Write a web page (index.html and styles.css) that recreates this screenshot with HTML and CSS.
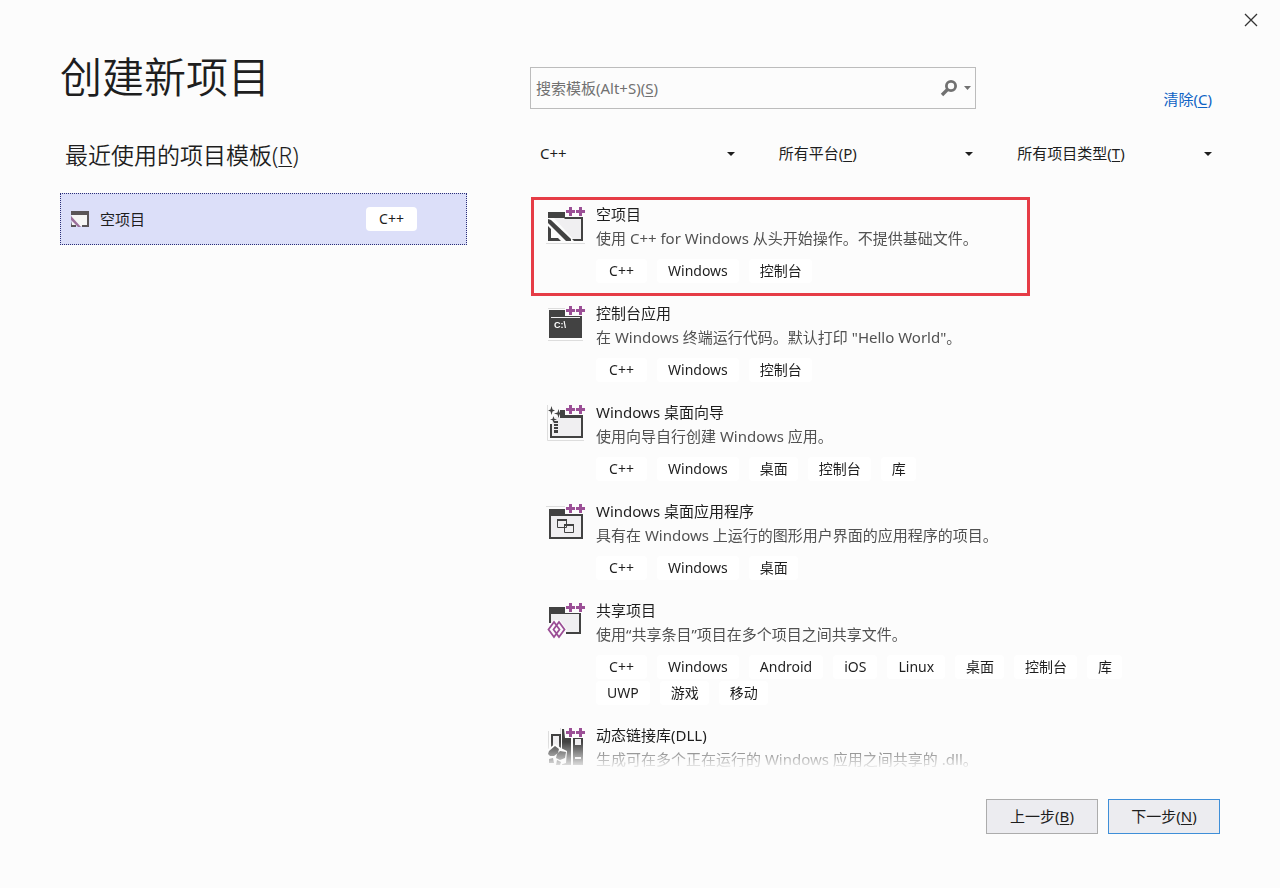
FILE: index.html
```html
<!DOCTYPE html>
<html lang="zh-CN">
<head>
<meta charset="utf-8">
<meta name="viewport" content="width=device-width, initial-scale=1">
<title>创建新项目</title>
<link rel="stylesheet" href="styles.css">
</head>
<body>
<svg class="defs" aria-hidden="true">
  <defs>
    <g id="plusplus">
      <path d="M19 2h21v11H19z" fill="#fcfcfc"/>
      <path d="M23 3h3v3h3v3h-3v3h-3V9h-3V6h3zM33 3h3v3h3v3h-3v3h-3V9h-3V6h3z" fill="#9b4f96"/>
    </g>
    <g id="empty-window">
      <path d="M7 13h29v23H28z" fill="#f0eff1"/>
      <path d="M2 8h17v5h18v24H28l-2-2h9V15H19l-1-1H2z" fill="#424242"/>
      <path d="M2 15l3 1 20 19v2h-5L2 19z" fill="#424242"/>
      <path d="M2 22l3 3v9h7l3 3H2z" fill="#424242"/>
    </g>
  </defs>
</svg>
<div class="dialog">
  <header class="titlebar">
    <button class="close" type="button" aria-label="关闭">
      <svg width="14" height="14" viewBox="0 0 14 14"><path d="M1 1l12 12M13 1L1 13" stroke="#333" stroke-width="1.3" fill="none"/></svg>
    </button>
  </header>
  <div class="columns">
    <section class="recent">
      <h1>创建新项目</h1>
      <h2>最近使用的项目模板(<u>R</u>)</h2>
      <button class="recent-item" type="button">
        <svg width="20" height="20" viewBox="0 0 20 20" aria-hidden="true">
          <path d="M2 3h16v14H2z" fill="#f6f6f6"/>
          <path d="M1 2h18v4H1zM17 6h2v12h-7v-2h5zM1 12l1 4h4v2H1z" fill="#5a5558"/>
          <path d="M1 7l10 11H8L1 11z" fill="#9b6f9b"/>
        </svg>
        <span class="recent-name">空项目</span>
        <span class="tag lang">C++</span>
      </button>
    </section>
    <section class="browse">
      <div class="search-row">
        <div class="search">
          <input id="search" type="text">
          <label for="search">搜索模板(Alt+S)(<u>S</u>)</label>
          <button class="search-button" type="button" aria-label="搜索">
            <svg width="32" height="20" viewBox="0 0 32 20"><circle cx="11" cy="8" r="4.6" stroke="#717171" stroke-width="2.8" fill="none"/><path d="M8 11l-6 6" stroke="#717171" stroke-width="3.4"/><path d="M24 8h7l-3.500 4z" fill="#717171"/></svg>
          </button>
        </div>
        <a class="clear" href="#">清除(<u>C</u>)</a>
      </div>
      <div class="filters">
        <div class="filter">
          <select aria-label="语言"><option>C++</option></select>
          <svg width="8" height="6" viewBox="0 0 8 6" aria-hidden="true"><path d="M0 2h8L4 6z" fill="#1e1e1e"/></svg>
        </div>
        <div class="filter">
          <label for="platform">所有平台(<u>P</u>)</label>
          <select id="platform"><option></option></select>
          <svg width="8" height="6" viewBox="0 0 8 6" aria-hidden="true"><path d="M0 2h8L4 6z" fill="#1e1e1e"/></svg>
        </div>
        <div class="filter">
          <label for="type">所有项目类型(<u>T</u>)</label>
          <select id="type"><option></option></select>
          <svg width="8" height="6" viewBox="0 0 8 6" aria-hidden="true"><path d="M0 2h8L4 6z" fill="#1e1e1e"/></svg>
        </div>
      </div>
      <ul class="templates">
        <li class="template marked">
          <svg class="icon" viewBox="0 0 40 40" aria-hidden="true">
            <path d="M0 39.500h39" stroke="#ddd"/>
            <use href="#empty-window"/><use href="#plusplus"/>
          </svg>
          <div class="info">
            <h3>空项目</h3>
            <p>使用 C++ for Windows 从头开始操作。不提供基础文件。</p>
            <div class="tags"><span class="tag lang">C++</span><span class="tag">Windows</span><span class="tag zh">控制台</span></div>
          </div>
        </li>
        <li class="template">
          <svg class="icon" viewBox="0 0 40 40" aria-hidden="true">
            <path d="M2 5.500h17M2 37.500h35" stroke="#ddd"/>
            <path d="M3 7h33v28H3z" fill="#424242"/>
            <path d="M5 14.500h29" stroke="#f0eff1"/>
            <text class="prompt" x="8" y="25">C:\</text>
            <use href="#plusplus"/>
          </svg>
          <div class="info">
            <h3>控制台应用</h3>
            <p>在 Windows 终端运行代码。默认打印 "Hello World"。</p>
            <div class="tags"><span class="tag lang">C++</span><span class="tag">Windows</span><span class="tag zh">控制台</span></div>
          </div>
        </li>
        <li class="template">
          <svg class="icon" viewBox="0 0 40 40" aria-hidden="true">
            <path d="M1.500 3v35.500H38" stroke="#ddd" fill="none"/>
            <path d="M6 15h29v19H6z" fill="#f0eff1"/>
            <path d="M14 8h5v5h18v23H4V22h2v12h29V16H14z" fill="#424242"/>
            <path d="M5.500 4l1 3.500L9 8.500 6.500 9.500l-1 3.500-1-3.500L2 8.500l2.500-1zM12.500 7l1 3.500 3.500 1-3.500 1-1 3.500-1-3.500-3.500-1 3.500-1zM7.500 14l.8 2.700 2.700.8-2.700.8-.8 2.700-.8-2.700-2.700-.8 2.700-.8z" fill="#424242"/>
            <path d="M8 19h4v2H8zM8 22h4v2H8zM8 25h4v2H8zM8 28h4v3H8z" fill="#424242"/>
            <use href="#plusplus"/>
          </svg>
          <div class="info">
            <h3>Windows 桌面向导</h3>
            <p>使用向导自行创建 Windows 应用。</p>
            <div class="tags"><span class="tag lang">C++</span><span class="tag">Windows</span><span class="tag zh">桌面</span><span class="tag zh">控制台</span><span class="tag zh">库</span></div>
          </div>
        </li>
        <li class="template">
          <svg class="icon" viewBox="0 0 40 40" aria-hidden="true">
            <path d="M0 5.500h19" stroke="#ddd"/>
            <path d="M4 15h32v22H4z" fill="#f0eff1"/>
            <path d="M3 8h16v5h18v25H3zM5 15v21h30V15z" fill="#424242" fill-rule="evenodd"/>
            <path d="M11.500 18.500h9v8h-9zM18.500 23.500h9v8h-9z" fill="#f0eff1" stroke="#424242"/>
            <path d="M11 18h10v2H11zM18 23h10v2H18z" fill="#424242"/>
            <use href="#plusplus"/>
          </svg>
          <div class="info">
            <h3>Windows 桌面应用程序</h3>
            <p>具有在 Windows 上运行的图形用户界面的应用程序的项目。</p>
            <div class="tags"><span class="tag lang">C++</span><span class="tag">Windows</span><span class="tag zh">桌面</span></div>
          </div>
        </li>
        <li class="template">
          <svg class="icon" viewBox="0 0 40 40" aria-hidden="true">
            <path d="M5 12h29v20H5z" fill="#f0eff1"/>
            <path d="M3 7h16v5h16v22H20v-2h13V14H5v9H3z" fill="#424242"/>
            <path d="M7 20h7l7 10-7 9H7l-6-9z" fill="#fcfcfc"/>
            <path d="M8 22l-5.500 7.500L8 37l5.500-7.500zM13 22l-5.500 7.500L13 37l5.500-7.500z" fill="none" stroke="#9b4f96" stroke-width="1.8"/>
            <use href="#plusplus"/>
          </svg>
          <div class="info">
            <h3>共享项目</h3>
            <p>使用“共享条目”项目在多个项目之间共享文件。</p>
            <div class="tags"><span class="tag lang">C++</span><span class="tag">Windows</span><span class="tag">Android</span><span class="tag">iOS</span><span class="tag">Linux</span><span class="tag zh">桌面</span><span class="tag zh">控制台</span><span class="tag zh">库</span><span class="tag">UWP</span><span class="tag zh">游戏</span><span class="tag zh">移动</span></div>
          </div>
        </li>
        <li class="template">
          <svg class="icon" viewBox="0 0 40 40" aria-hidden="true">
            <path d="M2.500 6v34M14.500 3v6" stroke="#ddd"/>
            <path d="M6 10h8v20H6z" fill="#f0eff1" stroke="#424242" stroke-width="2"/>
            <path d="M16 4h2l1 9h6v27h-9zM27 12h10v28H27z" fill="#424242"/>
            <path d="M29 14h6v6h-6zM29 32h6v2h-6z" fill="#f0eff1"/>
            <path d="M2 24l7-5 6 4 6 3-1 12-6 2H1z" fill="#fcfcfc"/>
            <path d="M3 26l6-5 4 3-1 4-4 3H4l-2-2zM14 26l6 1-1 6-5 2-4-2 1-4zM3 34l4-1 1 5H3zM11 35l4 2-1 3h-4z" fill="#424242"/>
            <use href="#plusplus"/>
          </svg>
          <div class="info">
            <h3>动态链接库(DLL)</h3>
            <p>生成可在多个正在运行的 Windows 应用之间共享的 .dll。</p>
          </div>
        </li>
      </ul>
    </section>
  </div>
  <footer class="actions">
    <button type="button">上一步(<u>B</u>)</button>
    <button class="primary" type="button">下一步(<u>N</u>)</button>
  </footer>
</div>
</body>
</html>
```
FILE: styles.css
```css
*, *::after {
  box-sizing: border-box;
}

body {
  margin: 0;
  background: #fcfcfc;
  color: #1e1e1e;
  font: 15px/24px "Noto Sans", "Noto Sans CJK SC", sans-serif;
}

h1, h2, h3, p, ul {
  margin: 0;
  padding: 0;
  font-weight: 400;
}

u {
  text-underline-offset: 2px;
  text-decoration-thickness: 1px;
}

button, input, select {
  margin: 0;
  border: 0;
  background: none;
  color: inherit;
  font: inherit;
}

svg {
  display: block;
  flex: none;
}

.defs {
  position: absolute;
  width: 0;
  height: 0;
}

.dialog {
  display: flex;
  flex-direction: column;
  height: 100vh;
}

.titlebar {
  display: flex;
  justify-content: flex-end;
  padding: 4px 13px 0;
  height: 40px;
}

.close {
  display: grid;
  place-items: center;
  width: 32px;
  height: 32px;
  padding: 0;
}

.columns {
  display: grid;
  grid-template-columns: 407fr 690fr;
  grid-template-rows: minmax(0, 1fr);
  gap: 63px;
  flex: 1;
  min-height: 0;
  padding: 0 60px;
}

.recent h1 {
  padding-top: 7px;
  font-size: 42px;
  font-weight: 350;
  line-height: 60px;
}

.recent h2 {
  padding: 31px 5px 0;
  font-size: 23px;
  font-weight: 350;
  line-height: 34px;
}

.recent-item {
  display: flex;
  align-items: center;
  width: 100%;
  height: 52px;
  margin-top: 21px;
  padding: 0 49px 0 9px;
  border: 1px dotted #2b2f77;
  background: #dcdff9;
  text-align: left;
}

.recent-name {
  flex: 1;
  padding-left: 10px;
}

.browse {
  display: flex;
  flex-direction: column;
  min-height: 0;
}

.search-row {
  display: flex;
  align-items: flex-end;
  justify-content: space-between;
  padding: 27px 8px 0 0;
}

.search {
  position: relative;
  flex: 0 1 446px;
  display: flex;
  align-items: center;
  height: 42px;
  border: 1px solid #bcbcbc;
}

.search input {
  flex: 1;
  height: 100%;
  min-width: 0;
  padding: 0 5px;
}

.search label {
  position: absolute;
  left: 5px;
  color: #717171;
  pointer-events: none;
}

.search input:focus + label {
  display: none;
}

.search-button {
  padding: 0 3px 0 0;
}

.clear {
  line-height: 20px;
  color: #0e63c4;
  text-decoration: none;
}

.filters {
  display: grid;
  grid-template-columns: repeat(3, 1fr);
  gap: 28px;
  padding: 28px 2px 28px 0;
}

.filter {
  position: relative;
  display: flex;
  align-items: center;
  height: 32px;
  padding-right: 6px;
}

.filter select {
  flex: 1;
  height: 100%;
  padding: 0 10px;
  appearance: none;
}

.filter label {
  position: absolute;
  left: 10px;
  pointer-events: none;
}

.templates {
  flex: 1;
  min-height: 0;
  overflow: hidden;
  list-style: none;
  mask-image: linear-gradient(to top, transparent, #000 28px);
}

.template {
  position: relative;
  display: flex;
  gap: 10px;
  padding: 5px 64px 12px 16px;
}

.marked::after {
  content: "";
  position: absolute;
  inset: 0 auto 0 1px;
  width: 499px;
  border: 3px solid #e63c46;
}

.icon {
  width: 40px;
  height: 40px;
  margin-top: 2px;
}

.prompt {
  fill: #fff;
  font: bold 9px "Liberation Sans", sans-serif;
}

.info {
  flex: 1;
}

.info h3 {
  font-size: 15px;
}

.info p {
  color: #515151;
}

.tags {
  display: flex;
  flex-wrap: wrap;
  column-gap: 10px;
  padding-top: 8px;
}

.tag {
  height: 24px;
  margin: 1px 0;
  padding: 0 11px;
  border-radius: 4px;
  background: #fff;
  font-size: 14px;
  line-height: 24px;
}

.zh {
  padding-right: 10px;
}

.lang {
  min-width: 51px;
  text-align: center;
}

.actions {
  display: flex;
  justify-content: flex-end;
  gap: 10px;
  padding: 29px 60px 54px;
}

.actions button {
  width: 112px;
  height: 35px;
  padding: 0 0 2px;
  border: 1px solid #acacac;
  background: #ececf0;
}

.actions .primary {
  border-color: #3f8fd8;
}
```
